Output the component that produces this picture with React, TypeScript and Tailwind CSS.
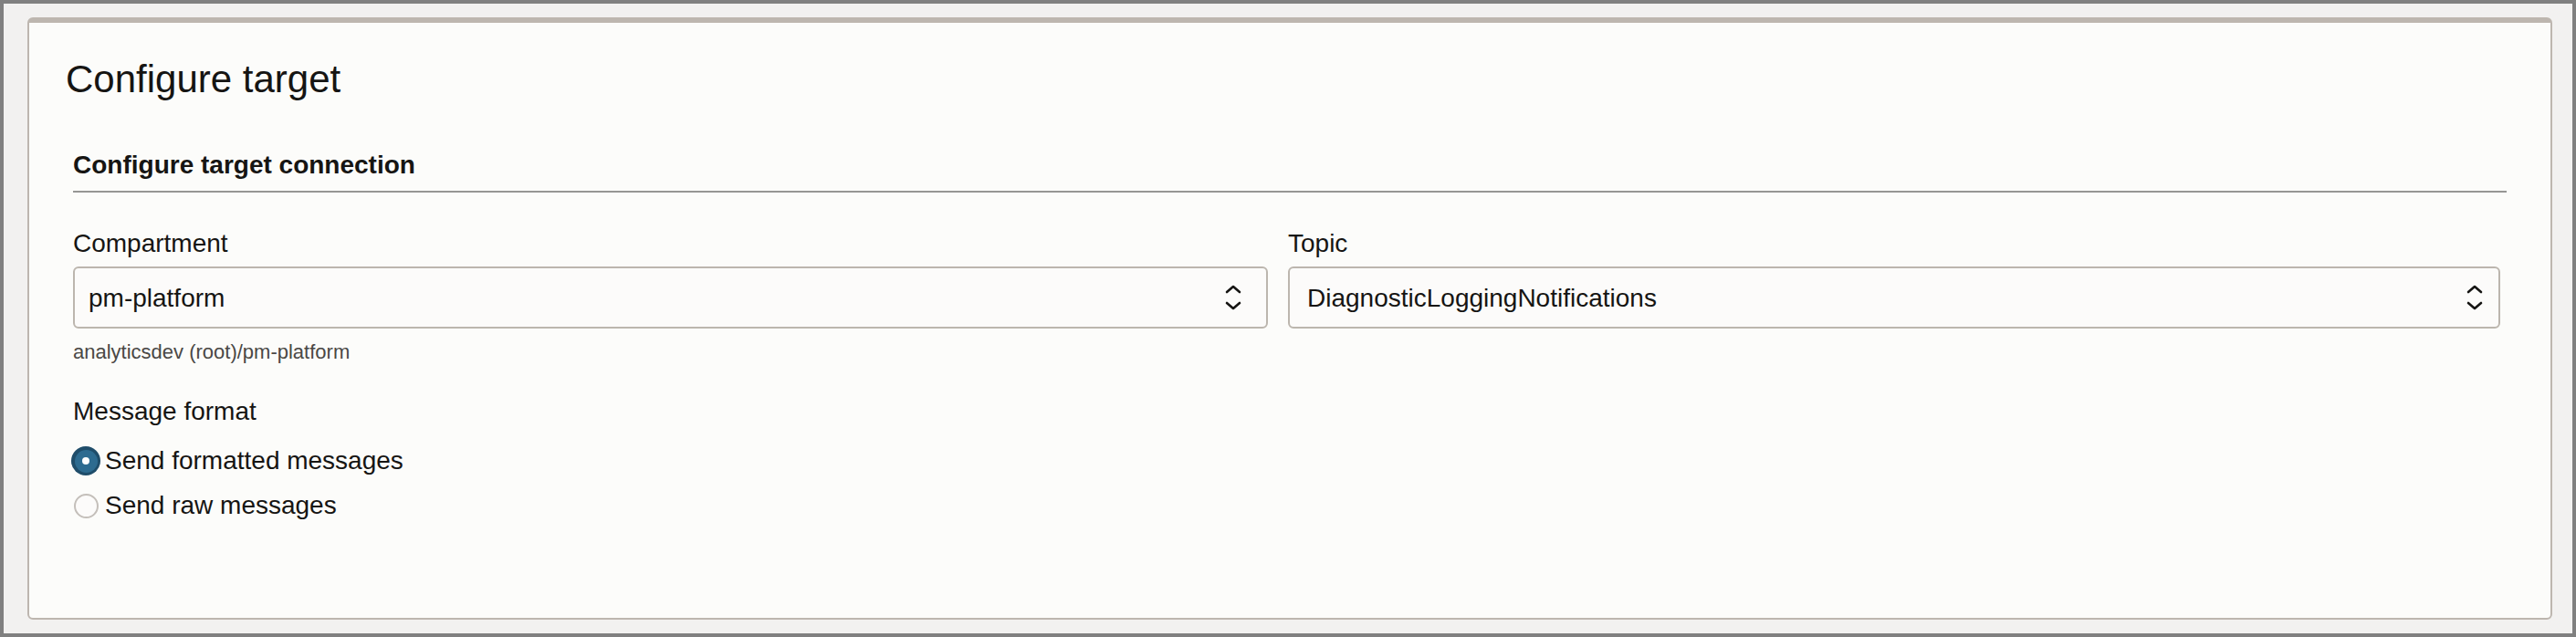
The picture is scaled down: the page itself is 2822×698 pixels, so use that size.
import React from 'react';

const font = { fontFamily: '"Liberation Sans", Arial, sans-serif' };

const Chevrons: React.FC = () => (
  <svg width="20" height="28" viewBox="0 0 20 28" fill="none" stroke="#161513" strokeWidth="2.6" strokeLinecap="round" strokeLinejoin="round">
    <path d="M3 8 L10 2 L17 8" />
    <path d="M3 20 L10 26 L17 20" />
  </svg>
);

interface SelectProps {
  value: string;
  padRight: string;
  padLeft: string;
}

const SelectBox: React.FC<SelectProps> = ({ value, padRight, padLeft }) => (
  <div className={`flex items-center justify-between h-[68px] rounded-[6px] border-2 border-[#bcb6ae] bg-[#fcfbfa] ${padLeft} ${padRight}`}>
    <span className="text-[28px] leading-[32px] text-[#161513] pt-[2px]">{value}</span>
    <Chevrons />
  </div>
);

const Radio: React.FC<{ checked?: boolean; label: string }> = ({ checked, label }) => (
  <div className="flex items-center h-[36px]">
    <div className="w-[28px] flex justify-center">
      {checked ? (
        <span className="flex items-center justify-center w-[32px] h-[32px] rounded-full bg-[#1f4d6a] shrink-0">
          <span className="flex items-center justify-center w-[25px] h-[25px] rounded-full bg-[#2d6b90]">
            <span className="w-[8px] h-[8px] rounded-full bg-white" />
          </span>
        </span>
      ) : (
        <span className="w-[27px] h-[27px] rounded-full border-2 border-[#c4bfba] bg-[#fcfbfa] shrink-0" />
      )}
    </div>
    <span className="ml-[7px] text-[28px] leading-[36px] text-[#161513]">{label}</span>
  </div>
);

export default function App() {
  return (
    <div style={font} className="w-[2822px] h-[698px] border-4 border-[#808080] bg-[#f2f1f0] pl-[26px] pr-[22px] pt-[15px] pb-[15px] flex">
      <div className="flex-1 rounded-[6px] border-x-2 border-b-2 border-t-[6px] border-[#bdb6af] bg-[#fcfcfa] px-[40px] pt-[38px]">
        <h1 className="text-[42px] leading-[48px] text-[#161513] font-normal">Configure target</h1>

        <div className="mx-[8px] mt-[54px]">
          <h2 className="text-[28px] leading-[32px] font-bold text-[#161513] pb-[12px] border-b-2 border-[#969694]">
            Configure target connection
          </h2>

          <div className="grid grid-cols-[1309px_1328px] gap-x-[22px] mt-[40px]">
            <div>
              <div className="text-[28px] leading-[32px] text-[#161513]">Compartment</div>
              <div className="mt-[9px]">
                <SelectBox value="pm-platform" padLeft="pl-[15px]" padRight="pr-[26px]" />
              </div>
              <div className="mt-[13px] text-[22px] leading-[26px] text-[#4a4845]">analyticsdev (root)/pm-platform</div>
            </div>
            <div>
              <div className="text-[28px] leading-[32px] text-[#161513]">Topic</div>
              <div className="mt-[9px]">
                <SelectBox value="DiagnosticLoggingNotifications" padLeft="pl-[19px]" padRight="pr-[16px]" />
              </div>
            </div>
          </div>

          <div className="mt-[36px] text-[28px] leading-[32px] text-[#161513]">Message format</div>
          <div className="mt-[20px] flex flex-col gap-[13px]">
            <Radio checked label="Send formatted messages" />
            <Radio label="Send raw messages" />
          </div>
        </div>
      </div>
    </div>
  );
}
